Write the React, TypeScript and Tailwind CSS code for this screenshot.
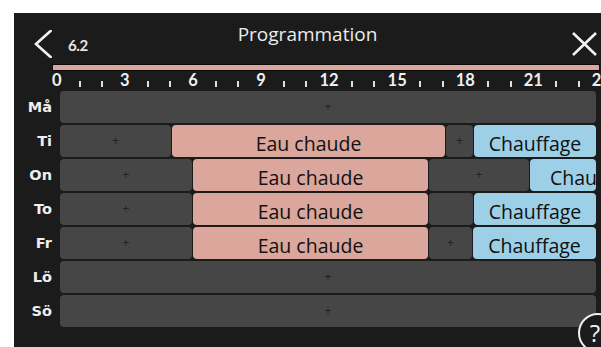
const hours = Array.from({ length: 25 }, (_, h) => h);

type Seg = { kind: "off" | "heat" | "water"; w?: string; plus?: boolean; label?: string; shift?: boolean };

const days: { name: string; segs: Seg[] }[] = [
  { name: "Må", segs: [{ kind: "off", plus: true }] },
  {
    name: "Ti",
    segs: [
      { kind: "off", w: "w-[111px]", plus: true },
      { kind: "water", w: "w-[273px]", label: "Eau chaude" },
      { kind: "off", w: "w-[27px]", plus: true },
      { kind: "heat", label: "Chauffage" },
    ],
  },
  {
    name: "On",
    segs: [
      { kind: "off", w: "w-[132px]", plus: true },
      { kind: "water", w: "w-[235px]", label: "Eau chaude" },
      { kind: "off", w: "w-[100px]", plus: true },
      { kind: "heat", label: "Chauffage", shift: true },
    ],
  },
  {
    name: "To",
    segs: [
      { kind: "off", w: "w-[132px]", plus: true },
      { kind: "water", w: "w-[235px]", label: "Eau chaude" },
      { kind: "off", w: "w-[44px]" },
      { kind: "heat", label: "Chauffage" },
    ],
  },
  {
    name: "Fr",
    segs: [
      { kind: "off", w: "w-[132px]", plus: true },
      { kind: "water", w: "w-[235px]", label: "Eau chaude" },
      { kind: "off", w: "w-[43px]", plus: true },
      { kind: "heat", label: "Chauffage" },
    ],
  },
  { name: "Lö", segs: [{ kind: "off", plus: true }] },
  { name: "Sö", segs: [{ kind: "off", plus: true }] },
];

const segColor = { off: "bg-[#464646]", water: "bg-[#dba69b]", heat: "bg-[#9dd0e7]" };

const Segment = ({ seg }: { seg: Seg }) => (
  <div
    className={`${seg.w ?? "flex-1"} ${segColor[seg.kind]} h-full rounded-[4px] overflow-hidden flex items-center ${seg.shift ? "justify-start pl-[20px]" : "justify-center"} shrink-0`}
  >
    {seg.plus ? <span className="text-[12px] leading-none text-[#222]">+</span> : null}
    {seg.label ? (
      <span className="pt-[6px] text-[19.5px] leading-none text-[#111] whitespace-nowrap">{seg.label}</span>
    ) : null}
  </div>
);

const App = () => {
  return (
    <div className="w-[601px] h-[347px] bg-white pl-[14px] pt-[13px] overflow-hidden" style={{ fontFamily: '"Open Sans", "Noto Sans", sans-serif' }}>
      <div className="relative w-[587px] h-[334px] bg-[#1b1b1b] flex flex-col">
        {/* header */}
        <div className="h-[51px] grid grid-cols-[1fr_auto_1fr] items-start">
          <div className="flex items-start pl-[20px] pt-[17px]">
            <svg width="18" height="28" viewBox="0 0 18 28" fill="none" stroke="#f2f2f2" strokeWidth="2.6" strokeLinecap="square">
              <path d="M16.5 1 L2 14 L16.5 27" />
            </svg>
            <span className="ml-[16px] mt-[8px] text-[15px] font-bold leading-none tracking-[-0.4px] text-[#e6e6e6]" style={{ fontFamily: '"Lato", sans-serif' }}>6.2</span>
          </div>
          <div className="pt-[9px] text-[19px] text-[#ececec] leading-[24px]">Programmation</div>
          <div className="flex justify-end pr-[4px] pt-[19px]">
            <svg width="25" height="24" viewBox="0 0 25 24" stroke="#f2f2f2" strokeWidth="2.6">
              <path d="M1 1 L24 23 M24 1 L1 23" />
            </svg>
          </div>
        </div>

        {/* progress bar */}
        <div className="ml-[38px] mr-px h-[7px] bg-[#dba69b] border border-[#0a0a0a]" />

        {/* hour scale */}
        <div className="ml-[31.5px] h-[20px] flex items-center">
          {hours.map(h => (
            <div key={h} className="w-[22.7px] shrink-0 flex justify-center items-end h-[14px]">
              {h % 3 === 0 ? (
                <span className="text-[16.5px] font-bold leading-none text-[#f0f0f0]" style={{ fontFamily: '"Lato", sans-serif' }}>{h}</span>
              ) : (
                <span className="w-[2px] h-[6px] mb-px bg-[#e0e0e0]" />
              )}
            </div>
          ))}
        </div>

        {/* day rows */}
        <div className="flex flex-col gap-[2px]">
          {days.map(d => (
            <div key={d.name} className="flex h-[32px] items-center">
              <div className="w-[38px] text-right text-[14.5px] font-bold text-[#eeeeee] leading-none" style={{ fontFamily: '"DejaVu Sans", sans-serif' }}>{d.name}</div>
              <div className="ml-[8px] w-[536px] h-full flex gap-px">
                {d.segs.map((s, i) => (
                  <Segment key={i} seg={s} />
                ))}
              </div>
            </div>
          ))}
        </div>

        {/* help button */}
        <div className="absolute left-[564px] top-[300px] w-[40px] h-[40px] rounded-full border-2 border-[#f0f0f0] bg-[#1b1b1b] flex items-center justify-center">
          <span className="text-[24px] text-[#f0f0f0] leading-none -ml-[6px]">?</span>
        </div>
      </div>
    </div>
  );
};

export default App;
